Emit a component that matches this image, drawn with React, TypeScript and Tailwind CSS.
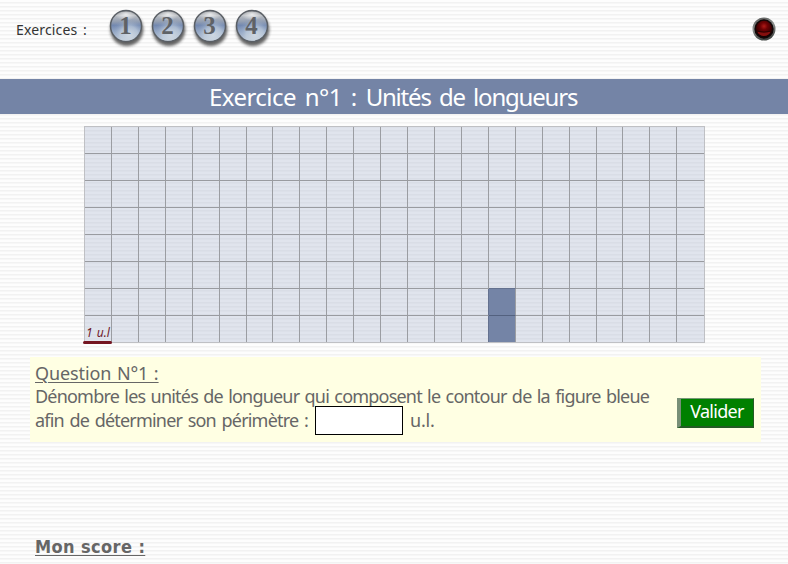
const COLUMNS = 23;
const ROWS = 8;

const stripes =
  "bg-[repeating-linear-gradient(to_bottom,#fdfdfd_0px,#fdfdfd_2px,#f2f2f2_2px,#f2f2f2_3px,#f7f7f7_3px,#f7f7f7_4px)]";

function NumberButton({ value }: { value: number }) {
  const id = `ball${value}`;
  return (
    <svg width="42" height="44" viewBox="0 0 42 44" role="button">
      <defs>
        <linearGradient id={id} x1="0" y1="0" x2="0" y2="1">
          <stop offset="0" stopColor="#6f7378" />
          <stop offset="0.16" stopColor="#b9bdc2" />
          <stop offset="0.36" stopColor="#939eb1" />
          <stop offset="0.48" stopColor="#7288b0" />
          <stop offset="0.7" stopColor="#98abc8" />
          <stop offset="1" stopColor="#c6cfd9" />
        </linearGradient>
        <radialGradient id={`${id}glow`} cx="0.6" cy="0.8" r="0.6">
          <stop offset="0" stopColor="#d3dbe3" stopOpacity="0.9" />
          <stop offset="0.5" stopColor="#c6d3e0" stopOpacity="0.6" />
          <stop offset="1" stopColor="#7d93b9" stopOpacity="0" />
        </radialGradient>
        <radialGradient id={`${id}top`} cx="0.5" cy="0.2" r="0.45">
          <stop offset="0" stopColor="#fff" stopOpacity="0.75" />
          <stop offset="1" stopColor="#fff" stopOpacity="0" />
        </radialGradient>
        <filter id={`${id}shadow`} x="-30%" y="-30%" width="160%" height="160%">
          <feGaussianBlur stdDeviation="1.6" />
        </filter>
      </defs>
      <circle cx="21.8" cy="23.5" r="16.5" fill="#333" opacity="0.75" filter={`url(#${id}shadow)`} />
      <circle cx="21" cy="20" r="15.5" fill={`url(#${id})`} stroke="#5a5f65" strokeWidth="1.5" />
      <circle cx="21" cy="20" r="14.7" fill={`url(#${id}glow)`} />
      <ellipse cx="21" cy="12.5" rx="12" ry="7" fill={`url(#${id}top)`} />
      <text x="20.5" y="28" textAnchor="middle" fill="#5f6266" className="font-['Liberation_Serif',serif] text-[25px] font-bold">
        {value}
      </text>
    </svg>
  );
}

function StopLight() {
  return (
    <svg width="24" height="24" viewBox="0 0 24 24">
      <defs>
        <linearGradient id="rim" x1="0" y1="0" x2="0.3" y2="1">
          <stop offset="0" stopColor="#555" />
          <stop offset="0.5" stopColor="#8d918f" />
          <stop offset="1" stopColor="#424644" />
        </linearGradient>
        <radialGradient id="lamp" cx="0.5" cy="0.34" r="0.62">
          <stop offset="0" stopColor="#b01b18" />
          <stop offset="0.35" stopColor="#700204" />
          <stop offset="0.8" stopColor="#3b0001" />
          <stop offset="1" stopColor="#160000" />
        </radialGradient>
      </defs>
      <circle cx="12" cy="12" r="11.5" fill="url(#rim)" />
      <circle cx="12" cy="12" r="9.7" fill="#120707" />
      <circle cx="12" cy="11.8" r="8" fill="url(#lamp)" />
      <path d="M5.3 14.6Q12 16.4 18.7 14.6Q17 19 12 19T5.3 14.6Z" fill="#850f0e" />
      <path d="M5 14.2Q12 16 19 14.2" fill="none" stroke="#240000" strokeWidth="0.8" />
    </svg>
  );
}

function Board() {
  return (
    <div className="ml-[57px] mt-3 grid h-[217px] w-[621px] grid-cols-[repeat(23,26.93px)] grid-rows-[repeat(8,27px)] overflow-hidden border border-[#bfc0c4] bg-[#b4bfd566]">
      {Array.from({ length: COLUMNS * ROWS }, (_, i) => {
        const column = i % COLUMNS;
        const row = Math.floor(i / COLUMNS);
        const blue = column === 15 && row >= 6;
        return (
          <div
            key={i}
            className={`border-b ${column === COLUMNS - 1 ? "" : "border-r"} ${column === 14 && row >= 6 ? "border-r-[#64718f]" : "border-r-[#9b9da2]"} ${blue ? "bg-[#7484a6]" : ""} ${blue && row === 6 ? "border-b-[#53617f]" : column === 15 && row === 5 ? "border-b-[#64718f]" : "border-b-[#999ba0]"}`}
          />
        );
      })}
    </div>
  );
}

export default function App() {
  return (
    <div className={`h-[564px] w-[788px] overflow-hidden font-['Noto_Sans',sans-serif] text-[#666] ${stripes}`}>
      <header className="flex h-[79px] items-start justify-between pl-4 pr-3">
        <div className="flex">
          <span className="mt-[20px] w-[89px] whitespace-nowrap text-[14px] leading-5 tracking-[0.15px] text-[#333] [word-spacing:2px]">Exercices :</span>
          <nav className="mt-[6px] flex">
            {[1, 2, 3, 4].map((value) => (
              <NumberButton key={value} value={value} />
            ))}
          </nav>
        </div>
        <div className="mt-[17px]">
          <StopLight />
        </div>
      </header>

      <h1 className="h-[35px] whitespace-nowrap bg-[#7484a6] pl-[209px] text-[24px] leading-[36px] tracking-[-1.2px] text-white [word-spacing:3.2px]">
        <span className="tracking-[-0.55px]">Exercice n°1 : </span>
        Unités de longueurs
      </h1>

      <main className="ml-[27px] h-[450px] w-[735px] bg-[repeating-linear-gradient(to_bottom,#f2f2f2_0px,#f2f2f2_1px,#f7f7f7_1px,#f7f7f7_2px,#fdfdfd_2px,#fdfdfd_4px)]">
        <div className="relative h-[243px] overflow-hidden">
          <Board />
          <span className="absolute left-[59px] top-[211px] whitespace-nowrap text-[12px] italic leading-4 text-[#701c2b] [word-spacing:1px]">
            1 u.l
          </span>
          <div className="absolute left-[56px] top-[227px] h-[3px] w-[29px] rounded-full bg-[#741522]" />
        </div>

        <section className="ml-[3px] flex h-[85px] w-[731px] bg-[#ffffe3] pl-[5px] pt-[4px]">
          <div className="w-[642px] whitespace-nowrap text-[18px] leading-6">
            <h2 className="tracking-[-0.1px] underline decoration-1 underline-offset-2 [word-spacing:1px]">Question N°1 :</h2>
            <p className="mt-[-1px] tracking-[-0.8px] [word-spacing:1.4px]">Dénombre les unités de longueur qui composent le contour de la figure bleue</p>
            <div className="flex tracking-[-0.8px]">
              <span className="w-[280px] [word-spacing:1.7px]">afin de déterminer son périmètre :</span>
              <input className="mt-[-2px] h-[29px] w-[88px] border border-black bg-white" aria-label="Périmètre" />
              <span className="ml-[7px] tracking-[-0.2px]">u.l.</span>
            </div>
          </div>
          <button className="mt-[37px] h-[30px] w-[77px] border border-b-2 border-l-4 border-b-[#245b24] border-l-[#788f78] border-r-[#245b24] border-t-[#779777] bg-[#008000] pb-1 text-[18px] leading-6 tracking-[-0.7px] text-white">
            Valider
          </button>
        </section>

        <h2 className="ml-2 mt-[93px] whitespace-nowrap font-['DejaVu_Sans_Condensed','DejaVu_Sans',sans-serif] text-[18px] font-bold leading-6 tracking-[0.4px] underline decoration-1 underline-offset-2 [font-stretch:condensed]">
          Mon score :
        </h2>
      </main>
    </div>
  );
}
